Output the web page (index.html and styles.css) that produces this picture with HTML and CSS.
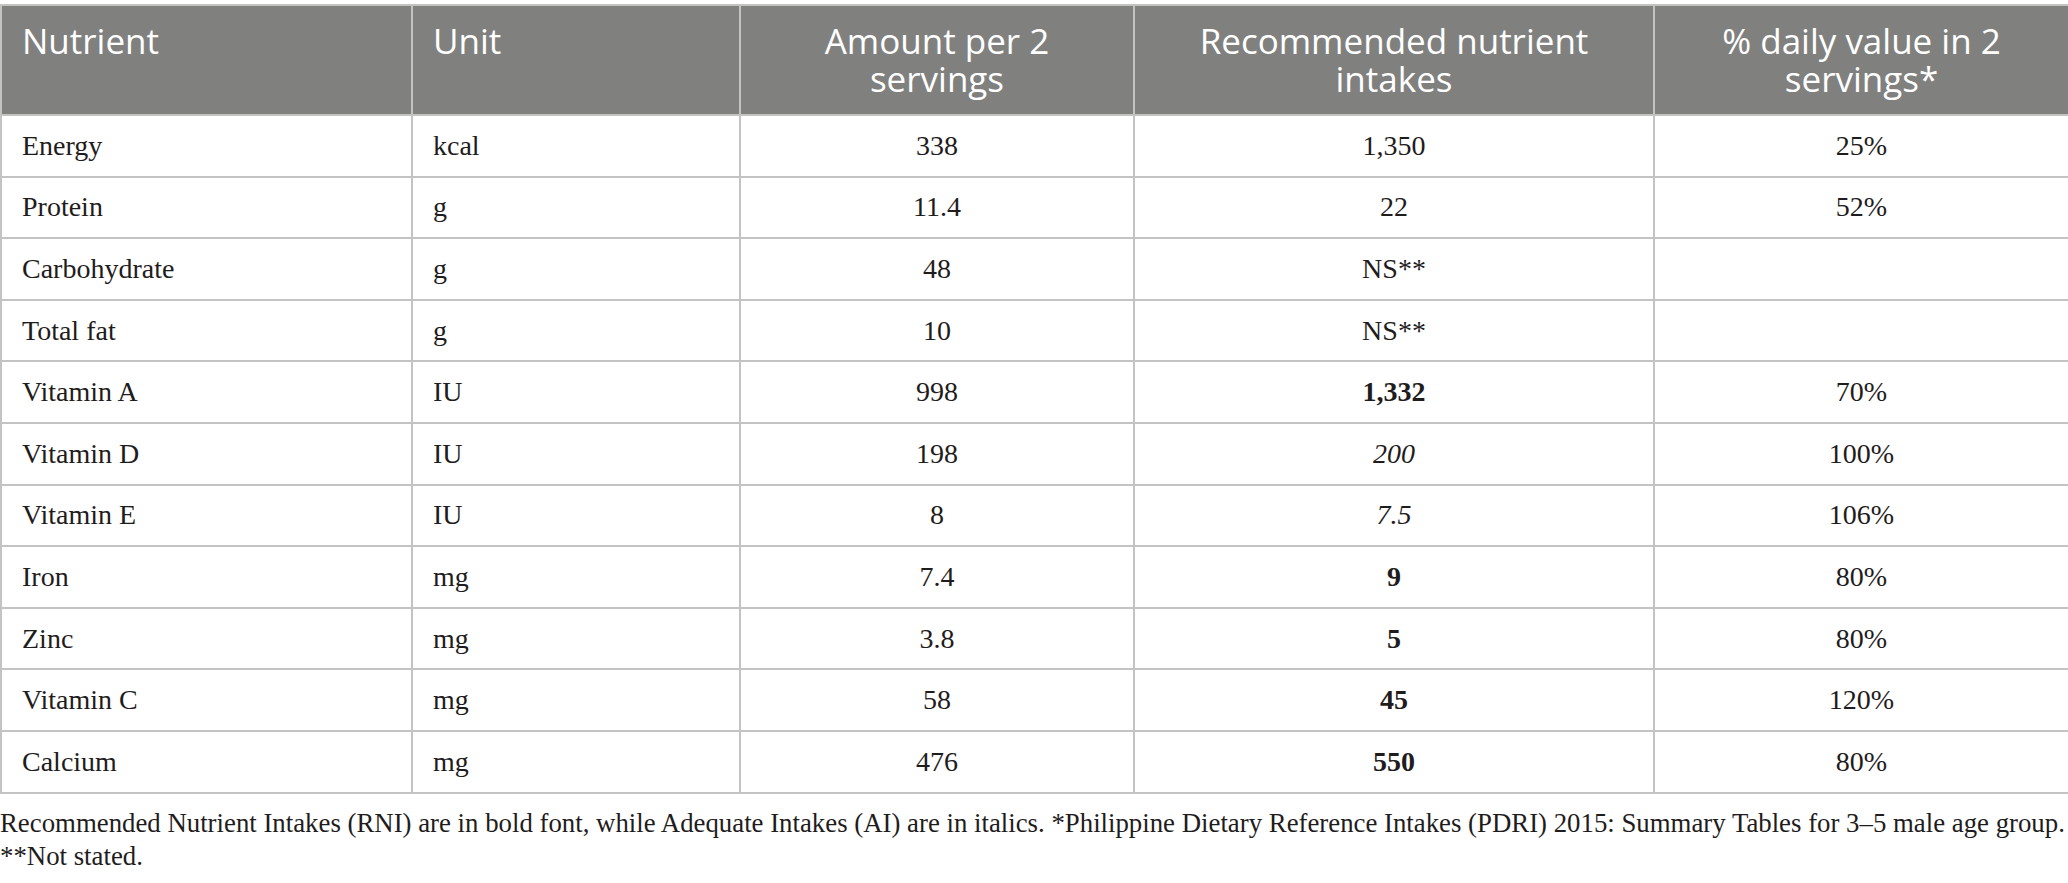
FILE: index.html
```html
<!DOCTYPE html>
<html lang="en">
<head>
<meta charset="utf-8">
<title>Nutrient table</title>
<link rel="stylesheet" href="styles.css">
</head>
<body>
<div class="page">
<table class="nt">
  <colgroup>
    <col class="c1"><col class="c2"><col class="c3"><col class="c4"><col class="c5">
  </colgroup>
  <thead>
    <tr>
      <th class="left">Nutrient</th>
      <th class="left">Unit</th>
      <th>Amount per 2<br>servings</th>
      <th>Recommended nutrient<br>intakes</th>
      <th>% daily value in 2<br>servings*</th>
    </tr>
  </thead>
  <tbody>
    <tr><td class="left">Energy</td><td class="left">kcal</td><td>338</td><td>1,350</td><td>25%</td></tr>
    <tr><td class="left">Protein</td><td class="left">g</td><td>11.4</td><td>22</td><td>52%</td></tr>
    <tr><td class="left">Carbohydrate</td><td class="left">g</td><td>48</td><td>NS**</td><td></td></tr>
    <tr><td class="left">Total fat</td><td class="left">g</td><td>10</td><td>NS**</td><td></td></tr>
    <tr><td class="left">Vitamin A</td><td class="left">IU</td><td>998</td><td><b>1,332</b></td><td>70%</td></tr>
    <tr><td class="left">Vitamin D</td><td class="left">IU</td><td>198</td><td><i>200</i></td><td>100%</td></tr>
    <tr><td class="left">Vitamin E</td><td class="left">IU</td><td>8</td><td><i>7.5</i></td><td>106%</td></tr>
    <tr><td class="left">Iron</td><td class="left">mg</td><td>7.4</td><td><b>9</b></td><td>80%</td></tr>
    <tr><td class="left">Zinc</td><td class="left">mg</td><td>3.8</td><td><b>5</b></td><td>80%</td></tr>
    <tr><td class="left">Vitamin C</td><td class="left">mg</td><td>58</td><td><b>45</b></td><td>120%</td></tr>
    <tr><td class="left">Calcium</td><td class="left">mg</td><td>476</td><td><b>550</b></td><td>80%</td></tr>
  </tbody>
</table>
<p class="note">Recommended Nutrient Intakes (RNI) are in bold font, while Adequate Intakes (AI) are in italics. *Philippine Dietary Reference Intakes (PDRI) 2015: Summary Tables for 3–5 male age group. **Not stated.</p>
</div>
</body>
</html>
```
FILE: styles.css
```css
html, body {
  margin: 0;
  padding: 0;
  background: #ffffff;
}
.page {
  padding-top: 4px;
  width: 2068px;
  color: #1f1c1d;
  font-family: "Liberation Serif", "Times New Roman", serif;
}
.nt {
  border-collapse: collapse;
  table-layout: fixed;
  width: 2068px;
}
.c1 { width: 411px; }
.c2 { width: 328px; }
.c3 { width: 394px; }
.c4 { width: 520px; }
.c5 { width: 415px; }
.nt th, .nt td {
  border: 2px solid #c3c3c3;
  text-align: center;
}
.nt th {
  background: #80817f;
  color: #ffffff;
  font-family: "Open Sans", "Noto Sans", sans-serif;
  font-weight: 400;
  font-size: 35px;
  line-height: 38px;
  vertical-align: top;
  padding: 16px 20px 14px;
  height: 110px;
  box-sizing: border-box;
}
.nt td {
  font-size: 28px;
  line-height: 32px;
  height: 61.6px;
  box-sizing: border-box;
  padding: 0 20px;
  vertical-align: middle;
}
.nt .left { text-align: left; }
.nt b { font-weight: 700; }
.nt i { font-style: italic; }
.note {
  margin: 13px 0 0;
  font-size: 26.8px;
  line-height: 33px;
}
```
